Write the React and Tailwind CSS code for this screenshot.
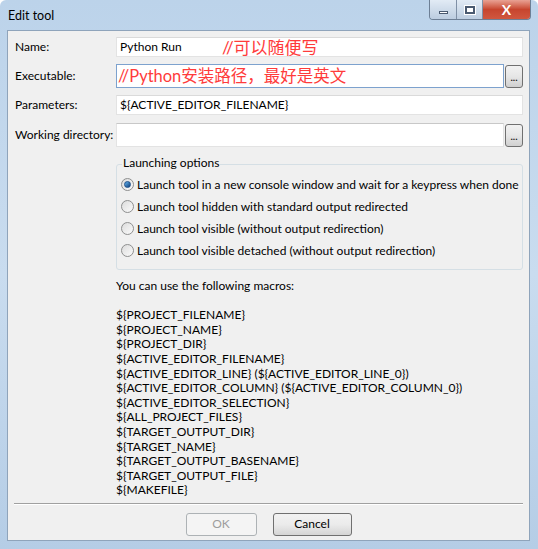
import React from 'react'

const macros = [
  '${PROJECT_FILENAME}',
  '${PROJECT_NAME}',
  '${PROJECT_DIR}',
  '${ACTIVE_EDITOR_FILENAME}',
  '${ACTIVE_EDITOR_LINE} (${ACTIVE_EDITOR_LINE_0})',
  '${ACTIVE_EDITOR_COLUMN} (${ACTIVE_EDITOR_COLUMN_0})',
  '${ACTIVE_EDITOR_SELECTION}',
  '${ALL_PROJECT_FILES}',
  '${TARGET_OUTPUT_DIR}',
  '${TARGET_NAME}',
  '${TARGET_OUTPUT_BASENAME}',
  '${TARGET_OUTPUT_FILE}',
  '${MAKEFILE}',
]

const options = [
  'Launch tool in a new console window and wait for a keypress when done',
  'Launch tool hidden with standard output redirected',
  'Launch tool visible (without output redirection)',
  'Launch tool visible detached (without output redirection)',
]

function Radio({ checked }) {
  return (
    <span className="w-[13px] h-[13px] rounded-full border border-[#8e8f8f] bg-gradient-to-br from-[#dcdcdc] to-[#fbfbfb] flex items-center justify-center shrink-0">
      {checked && (
        <span className="w-[7px] h-[7px] rounded-full bg-gradient-to-br from-[#66b6f0] to-[#0f3f7a] border border-[#1d4f8a]" />
      )}
    </span>
  )
}

function BrowseButton() {
  return (
    <button className="w-[18px] h-[23px] ml-[1px] rounded-[3px] border border-[#707070] bg-gradient-to-b from-[#f2f2f2] via-[#e6e6e6] to-[#d0d0d0] flex items-end justify-center pb-[5px] text-[10px] leading-none font-bold text-[#222]">
      ...
    </button>
  )
}

export default function App() {
  return (
    <div
      className="w-[538px] h-[549px] bg-gradient-to-b from-[#bcd3ea] via-[#c9dcef] to-[#b5cde6] rounded-t-[6px] flex flex-col text-[12px] text-black"
      style={{ fontFamily: 'Lato, "Noto Sans CJK SC", sans-serif' }}
    >
      {/* Title bar */}
      <div className="h-[30px] flex items-start justify-between">
        <span className="pl-[8px] pt-[7px] text-[12.5px] text-black">Edit tool</span>
        <div className="flex mr-[7px] h-[20px] rounded-b-[4px] border border-t-0 border-[#6d7f95] overflow-hidden">
          <div className="w-[27px] bg-gradient-to-b from-[#e2ebf5] to-[#bccde0] border-r border-[#7f90a6] flex items-end justify-center pb-[5px]">
            <span className="w-[9px] h-[3px] bg-white border border-[#4a5a70]" />
          </div>
          <div className="w-[26px] bg-gradient-to-b from-[#e2ebf5] to-[#bccde0] border-r border-[#7f90a6] flex items-center justify-center">
            <span className="w-[10px] h-[8px] border-2 border-[#4a5a70] bg-white outline outline-1 outline-white" />
          </div>
          <div className="w-[47px] bg-gradient-to-b from-[#e8a193] via-[#c7452e] to-[#d0573f] flex items-center justify-center text-white font-bold text-[14px] leading-none">
            X
          </div>
        </div>
      </div>

      {/* Client area */}
      <div className="flex-1 ml-[7px] mr-[8px] mb-[8px] border border-[#8fa4bb] bg-[#f0f0f0] flex flex-col px-[6px] pt-[6px]">
        {/* Name */}
        <div className="flex items-center h-[20px]">
          <span className="w-[102px] pl-[1px]">Name:</span>
          <div className="flex-1 h-[20px] border border-[#e3e3e3] border-t-[#dadada] bg-white flex items-center px-[3px]">
            <span className="w-[102px]">Python Run</span>
            <span className="text-[#ff3b3b] text-[17px] leading-none">//可以随便写</span>
          </div>
        </div>

        {/* Executable */}
        <div className="flex items-center h-[24px] mt-[7px]">
          <span className="w-[102px] pl-[1px]">Executable:</span>
          <div className="flex-1 h-[24px] border border-[#7da2ce] bg-white flex items-center px-[1px]">
            <span className="text-[#ff3b3b] text-[16.5px] leading-none">//Python安装路径，最好是英文</span>
          </div>
          <BrowseButton />
        </div>

        {/* Parameters */}
        <div className="flex items-center h-[20px] mt-[7px]">
          <span className="w-[102px] pl-[1px]">Parameters:</span>
          <div className="flex-1 h-[20px] border border-[#e3e3e3] border-t-[#dadada] bg-white flex items-center px-[3px]">
            ${'{'}ACTIVE_EDITOR_FILENAME{'}'}
          </div>
        </div>

        {/* Working directory */}
        <div className="flex items-center h-[24px] mt-[8px]">
          <span className="w-[102px] pl-[1px]">Working directory:</span>
          <div className="flex-1 h-[24px] border border-[#e3e3e3] border-t-[#c8c8c8] bg-white" />
          <BrowseButton />
        </div>

        {/* Launching options */}
        <div className="ml-[102px] mt-[17px] relative border border-[#d5dfe5] rounded-[3px] h-[106px] pt-[13px] pl-[4px] flex flex-col gap-[9px]">
          <span className="absolute -top-[8px] left-[5px] px-[1px] bg-[#f0f0f0] leading-none">Launching options</span>
          {options.map((o, i) => (
            <label key={i} className="flex items-center gap-[3px] h-[13px] whitespace-nowrap">
              <Radio checked={i === 0} />
              <span className="leading-none">{o}</span>
            </label>
          ))}
        </div>

        {/* Macros */}
        <div className="ml-[102px] mt-[9px] leading-[14.6px]">
          <p>You can use the following macros:</p>
          <p className="h-[14.6px]" />
          {macros.map((m) => (
            <p key={m}>{m}</p>
          ))}
        </div>

        {/* Separator */}
        <div className="mt-[5px] border-t border-[#a0a0a0] border-b border-b-white" />

        {/* Buttons */}
        <div className="flex justify-center gap-[16px] mt-[8px]">
          <button className="w-[71px] h-[23px] rounded-[3px] border border-[#adb2b5] bg-[#f4f4f4] text-[#9d9d9d]">
            OK
          </button>
          <button className="w-[79px] h-[23px] rounded-[3px] border border-[#707070] bg-gradient-to-b from-[#f2f2f2] via-[#ebebeb] to-[#d5d5d5] text-black">
            Cancel
          </button>
        </div>
      </div>
    </div>
  )
}
